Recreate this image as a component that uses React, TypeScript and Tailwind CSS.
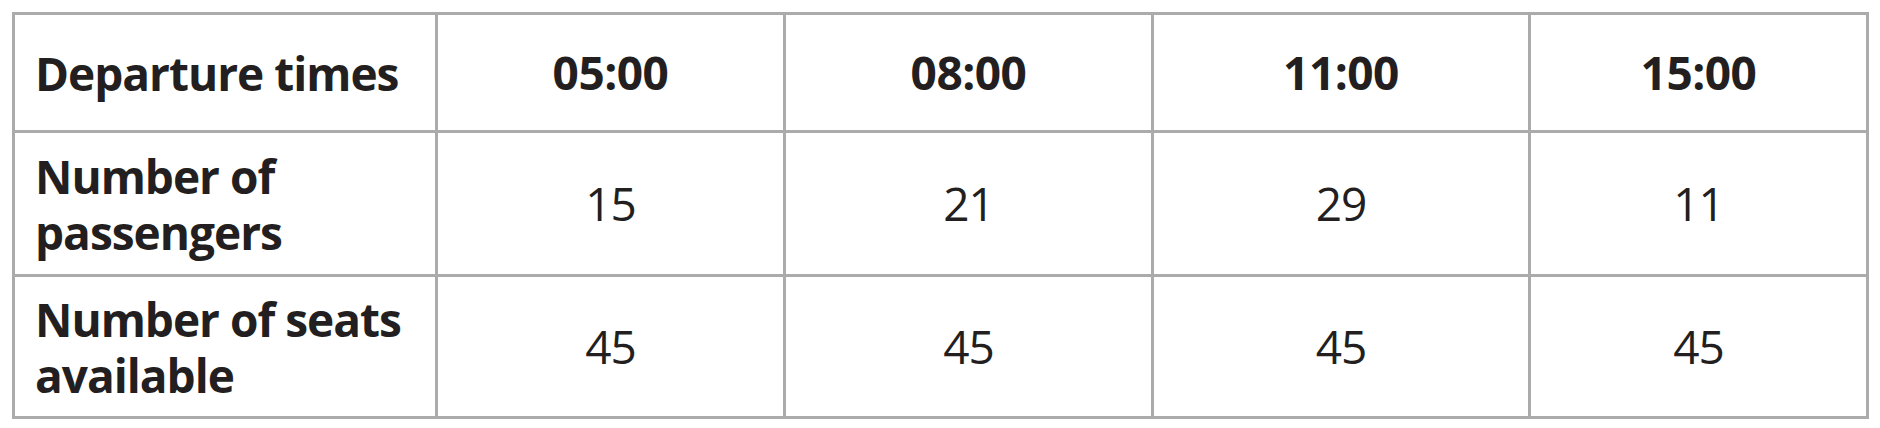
const times = ["05:00", "08:00", "11:00", "15:00"];

const rows = [
  { label: ["Number of", "passengers"], values: [15, 21, 29, 11] },
  { label: ["Number of seats", "available"], values: [45, 45, 45, 45] },
];

export default function App() {
  return (
    <div
      className="min-h-screen bg-white pt-[12px] pl-[12px] text-[#231f20]"
      style={{ fontFamily: '"Open Sans", "Noto Sans", sans-serif' }}
    >
      <div className="grid w-[1857px] grid-cols-[420px_345px_365px_374px_335px] grid-rows-[115px_141px_139px] gap-[3px] bg-[#ababab] p-[3px]">
        <div className="flex items-center bg-white pl-[20px] text-[46px] font-bold leading-[56px] tracking-[-1px]">
          Departure times
        </div>
        {times.map((t) => (
          <div
            key={t}
            className="flex items-center justify-center bg-white text-[46px] font-bold tracking-[-0.5px]"
          >
            {t}
          </div>
        ))}
        {rows.map((row) => (
          <>
            <div
              key={row.label[0] + row.label[1]}
              className="flex flex-col justify-center bg-white pl-[20px] text-[46px] font-bold leading-[56px] tracking-[-1px]"
            >
              <span>{row.label[0]}</span>
              <span>{row.label[1]}</span>
            </div>
            {row.values.map((v, i) => (
              <div
                key={row.label[1] + i}
                className="flex items-center justify-center bg-white text-[46px] tracking-[-1px]"
              >
                {v}
              </div>
            ))}
          </>
        ))}
      </div>
    </div>
  );
}
